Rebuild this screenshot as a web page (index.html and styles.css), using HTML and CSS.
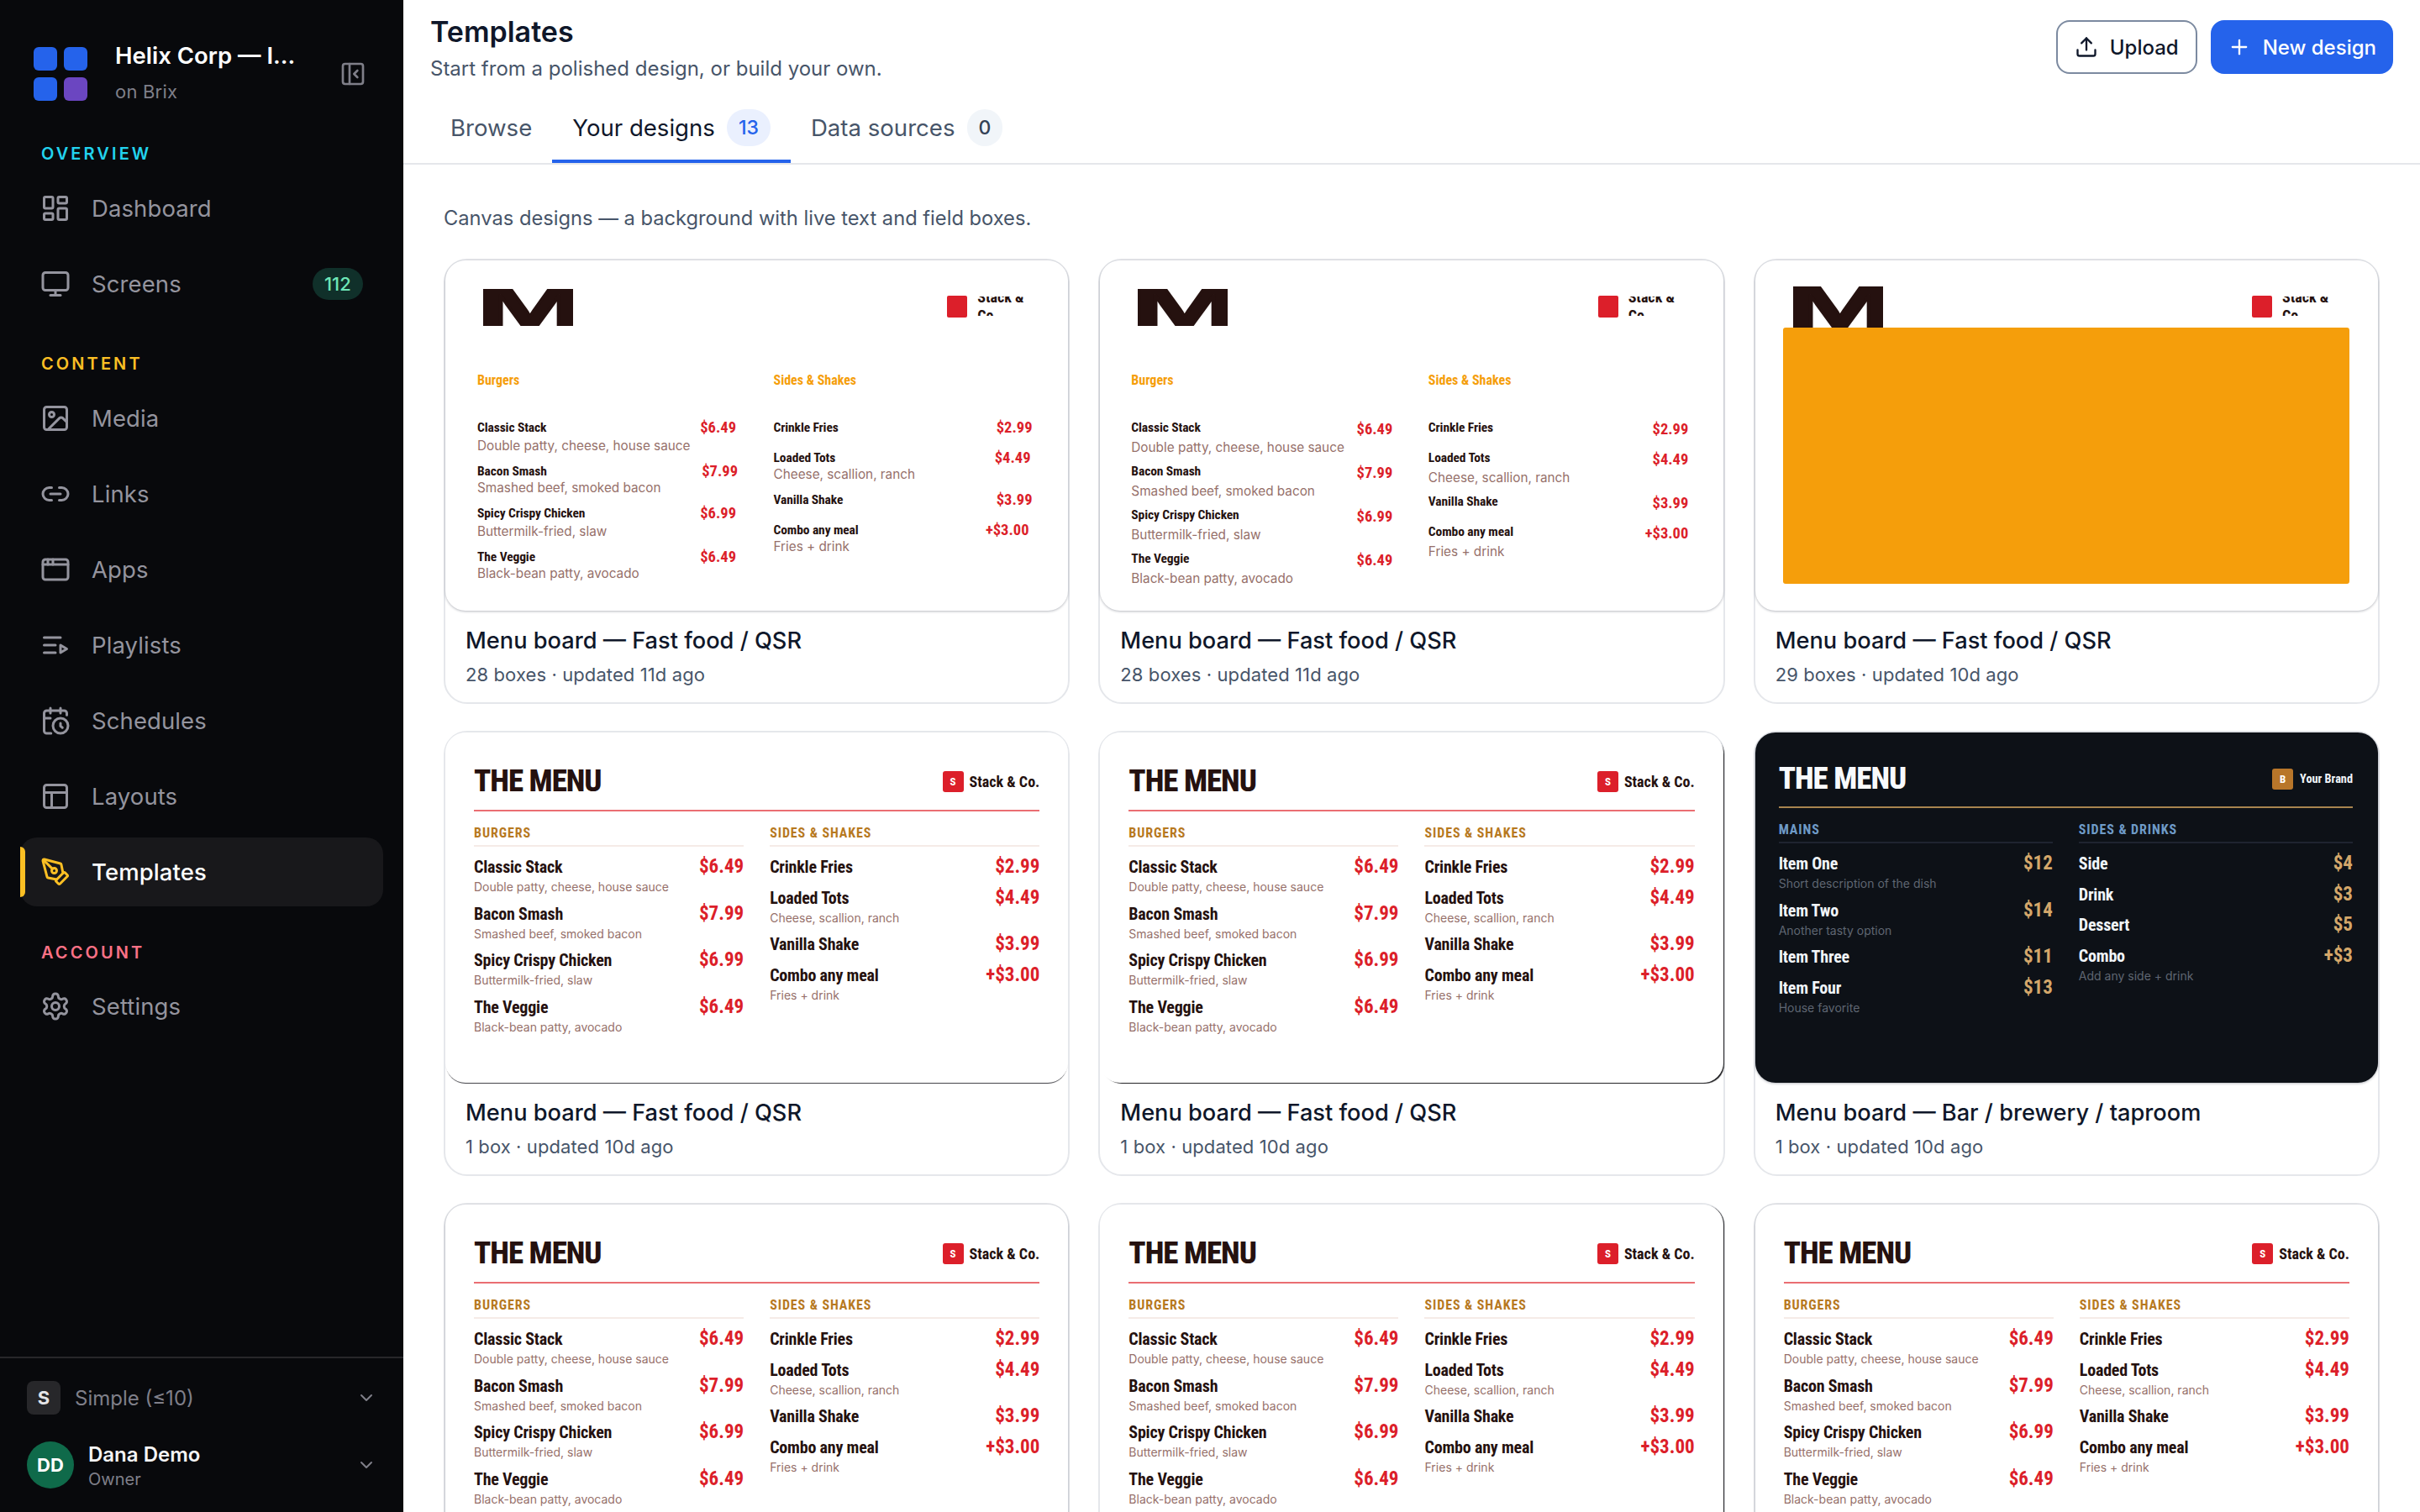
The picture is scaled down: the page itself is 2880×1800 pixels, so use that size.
FILE: index.html
```html
<!DOCTYPE html>
<html lang="en">

<head>
    <meta charset="UTF-8">
    <title>Templates</title>
    <link rel="stylesheet" href="styles.css">
</head>

<body>
    <div class="app">
        <aside class="sidebar">
            <div class="brand">
                <div class="brand-logo"><i></i><i></i><i></i><i class="purple"></i></div>
                <div class="brand-text">
                    <div class="brand-name">Helix Corp — I...</div>
                    <div class="brand-sub">on Brix</div>
                </div>
                <svg class="collapse" viewBox="0 0 24 24"><rect x="3" y="3" width="18" height="18" rx="2"/><path d="M9 3v18"/><path d="m16 15-3-3 3-3"/></svg>
            </div>

            <div class="nav-label cyan">OVERVIEW</div>
            <nav class="nav">
                <a class="nav-item"><svg viewBox="0 0 24 24"><rect x="3" y="3" width="7" height="9" rx="1"/><rect x="14" y="3" width="7" height="5" rx="1"/><rect x="14" y="12" width="7" height="9" rx="1"/><rect x="3" y="16" width="7" height="5" rx="1"/></svg>Dashboard</a>
                <a class="nav-item"><svg viewBox="0 0 24 24"><rect x="2" y="3" width="20" height="14" rx="2"/><path d="M8 21h8"/><path d="M12 17v4"/></svg>Screens<span class="nav-badge">112</span></a>
            </nav>

            <div class="nav-label amber">CONTENT</div>
            <nav class="nav">
                <a class="nav-item"><svg viewBox="0 0 24 24"><rect x="3" y="3" width="18" height="18" rx="2"/><circle cx="9" cy="9" r="2"/><path d="m21 15-3.086-3.086a2 2 0 0 0-2.828 0L6 21"/></svg>Media</a>
                <a class="nav-item"><svg viewBox="0 0 24 24"><path d="M9 17H7A5 5 0 0 1 7 7h2"/><path d="M15 7h2a5 5 0 1 1 0 10h-2"/><path d="M8 12h8"/></svg>Links</a>
                <a class="nav-item"><svg viewBox="0 0 24 24"><rect x="2" y="4" width="20" height="16" rx="2"/><path d="M10 4v4"/><path d="M2 8h20"/><path d="M6 4v4"/></svg>Apps</a>
                <a class="nav-item"><svg viewBox="0 0 24 24"><path d="M12 12H3"/><path d="M16 6H3"/><path d="M12 18H3"/><path d="m16 12 5 3-5 3v-6Z"/></svg>Playlists</a>
                <a class="nav-item"><svg viewBox="0 0 24 24"><path d="M21 7.5V6a2 2 0 0 0-2-2H5a2 2 0 0 0-2 2v14a2 2 0 0 0 2 2h3.5"/><path d="M16 2v4"/><path d="M8 2v4"/><path d="M3 10h5"/><path d="M17.5 17.5 16 16.3V14"/><circle cx="16" cy="16" r="6"/></svg>Schedules</a>
                <a class="nav-item"><svg viewBox="0 0 24 24"><rect x="3" y="3" width="18" height="18" rx="2"/><path d="M3 9h18"/><path d="M9 21V9"/></svg>Layouts</a>
                <a class="nav-item active"><svg viewBox="0 0 24 24"><path d="M15.707 21.293a1 1 0 0 1-1.414 0l-1.586-1.586a1 1 0 0 1 0-1.414l5.586-5.586a1 1 0 0 1 1.414 0l1.586 1.586a1 1 0 0 1 0 1.414z"/><path d="m18 13-1.375-6.874a1 1 0 0 0-.746-.776L3.235 2.028a1 1 0 0 0-1.207 1.207L5.35 15.879a1 1 0 0 0 .776.746L13 18"/><path d="m2.3 2.3 7.286 7.286"/><circle cx="11" cy="11" r="2"/></svg>Templates</a>
            </nav>

            <div class="nav-label rose">ACCOUNT</div>
            <nav class="nav">
                <a class="nav-item"><svg viewBox="0 0 24 24"><path d="M12.22 2h-.44a2 2 0 0 0-2 2v.18a2 2 0 0 1-1 1.73l-.43.25a2 2 0 0 1-2 0l-.15-.08a2 2 0 0 0-2.73.73l-.22.38a2 2 0 0 0 .73 2.73l.15.1a2 2 0 0 1 1 1.72v.51a2 2 0 0 1-1 1.74l-.15.09a2 2 0 0 0-.73 2.73l.22.38a2 2 0 0 0 2.73.73l.15-.08a2 2 0 0 1 2 0l.43.25a2 2 0 0 1 1 1.73V20a2 2 0 0 0 2 2h.44a2 2 0 0 0 2-2v-.18a2 2 0 0 1 1-1.73l.43-.25a2 2 0 0 1 2 0l.15.08a2 2 0 0 0 2.73-.73l.22-.39a2 2 0 0 0-.73-2.73l-.15-.08a2 2 0 0 1-1-1.74v-.5a2 2 0 0 1 1-1.74l.15-.09a2 2 0 0 0 .73-2.73l-.22-.38a2 2 0 0 0-2.73-.73l-.15.08a2 2 0 0 1-2 0l-.43-.25a2 2 0 0 1-1-1.73V4a2 2 0 0 0-2-2z"/><circle cx="12" cy="12" r="3"/></svg>Settings</a>
            </nav>

            <div class="side-foot">
                <div class="plan">
                    <span class="plan-icon">S</span>
                    <span class="plan-name">Simple (≤10)</span>
                    <svg class="chev" viewBox="0 0 24 24"><path d="m6 9 6 6 6-6"/></svg>
                </div>
                <div class="user">
                    <span class="avatar">DD</span>
                    <div class="user-text">
                        <div class="user-name">Dana Demo</div>
                        <div class="user-role">Owner</div>
                    </div>
                    <svg class="chev" viewBox="0 0 24 24"><path d="m6 9 6 6 6-6"/></svg>
                </div>
            </div>
        </aside>

        <main class="main">
            <header class="topbar">
                <div class="top-row">
                    <div>
                        <h1>Templates</h1>
                        <p class="subtitle">Start from a polished design, or build your own.</p>
                    </div>
                    <div class="actions">
                        <button class="btn"><svg viewBox="0 0 24 24"><path d="M21 15v4a2 2 0 0 1-2 2H5a2 2 0 0 1-2-2v-4"/><path d="M17 8l-5-5-5 5"/><path d="M12 3v12"/></svg>Upload</button>
                        <button class="btn primary"><svg viewBox="0 0 24 24"><path d="M5 12h14"/><path d="M12 5v14"/></svg>New design</button>
                    </div>
                </div>
                <div class="tabs">
                    <a class="tab">Browse</a>
                    <a class="tab active">Your designs<span class="count blue">13</span></a>
                    <a class="tab">Data sources<span class="count">0</span></a>
                </div>
            </header>

            <section class="content">
                <p class="intro">Canvas designs — a background with live text and field boxes.</p>
                <div class="grid">

                    <article class="card">
                        <div class="preview canvas">
                            <div class="canvas-head">
                                <div class="clip-title"><span>M</span></div>
                                <div class="clip-logo"><span class="clip-mark"></span><span class="clip-name"><span>Stack &amp;<br>Co.</span></span></div>
                            </div>
                            <div class="canvas-cols">
                                <div>
                                    <div class="canvas-sec">Burgers</div>
                                    <div class="item"><span class="name">Classic Stack</span><span class="price">$6.49</span><span class="desc">Double patty, cheese, house sauce</span></div>
                                    <div class="item tight"><span class="name">Bacon Smash</span><span class="price push-r">$7.99</span><span class="desc">Smashed beef, smoked bacon</span></div>
                                    <div class="item"><span class="name">Spicy Crispy Chicken</span><span class="price">$6.99</span><span class="desc">Buttermilk-fried, slaw</span></div>
                                    <div class="item tight"><span class="name">The Veggie</span><span class="price">$6.49</span><span class="desc">Black-bean patty, avocado</span></div>
                                </div>
                                <div>
                                    <div class="canvas-sec">Sides &amp; Shakes</div>
                                    <div class="item short"><span class="name">Crinkle Fries</span><span class="price">$2.99</span></div>
                                    <div class="item tight"><span class="name">Loaded Tots</span><span class="price push-l">$4.49</span><span class="desc">Cheese, scallion, ranch</span></div>
                                    <div class="item short"><span class="name">Vanilla Shake</span><span class="price">$3.99</span></div>
                                    <div class="item tight"><span class="name">Combo any meal</span><span class="price push-l2">+$3.00</span><span class="desc">Fries + drink</span></div>
                                </div>
                            </div>
                        </div>
                        <div class="caption"><div class="card-title">Menu board — Fast food / QSR</div><div class="card-meta">28 boxes · updated 11d ago</div></div>
                    </article>

                    <article class="card">
                        <div class="preview canvas second">
                            <div class="canvas-head">
                                <div class="clip-title"><span>M</span></div>
                                <div class="clip-logo"><span class="clip-mark"></span><span class="clip-name"><span>Stack &amp;<br>Co.</span></span></div>
                            </div>
                            <div class="canvas-cols">
                                <div>
                                    <div class="canvas-sec">Burgers</div>
                                    <div class="item"><span class="name">Classic Stack</span><span class="price">$6.49</span><span class="desc">Double patty, cheese, house sauce</span></div>
                                    <div class="item"><span class="name">Bacon Smash</span><span class="price">$7.99</span><span class="desc">Smashed beef, smoked bacon</span></div>
                                    <div class="item"><span class="name">Spicy Crispy Chicken</span><span class="price">$6.99</span><span class="desc">Buttermilk-fried, slaw</span></div>
                                    <div class="item"><span class="name">The Veggie</span><span class="price">$6.49</span><span class="desc">Black-bean patty, avocado</span></div>
                                </div>
                                <div>
                                    <div class="canvas-sec">Sides &amp; Shakes</div>
                                    <div class="item short"><span class="name">Crinkle Fries</span><span class="price">$2.99</span></div>
                                    <div class="item"><span class="name">Loaded Tots</span><span class="price">$4.49</span><span class="desc">Cheese, scallion, ranch</span></div>
                                    <div class="item short"><span class="name">Vanilla Shake</span><span class="price">$3.99</span></div>
                                    <div class="item"><span class="name">Combo any meal</span><span class="price">+$3.00</span><span class="desc">Fries + drink</span></div>
                                </div>
                            </div>
                        </div>
                        <div class="caption"><div class="card-title">Menu board — Fast food / QSR</div><div class="card-meta">28 boxes · updated 11d ago</div></div>
                    </article>

                    <article class="card">
                        <div class="preview canvas third">
                            <div class="canvas-head">
                                <div class="clip-title"><span>M</span></div>
                                <div class="clip-logo"><span class="clip-mark"></span><span class="clip-name"><span>Stack &amp;<br>Co.</span></span></div>
                            </div>
                            <div class="orange-box"></div>
                        </div>
                        <div class="caption"><div class="card-title">Menu board — Fast food / QSR</div><div class="card-meta">29 boxes · updated 10d ago</div></div>
                    </article>

                    <article class="card">
                        <div class="preview board edge-b">
                            <div class="board-head"><div class="board-title">THE MENU</div><div class="board-logo"><span class="mark">S</span>Stack &amp; Co.</div></div>
                            <div class="board-cols">
                                <div>
                                    <div class="board-sec">BURGERS</div>
                                    <div class="row"><span class="name">Classic Stack</span><span class="price">$6.49</span><span class="desc">Double patty, cheese, house sauce</span></div>
                                    <div class="row"><span class="name">Bacon Smash</span><span class="price">$7.99</span><span class="desc">Smashed beef, smoked bacon</span></div>
                                    <div class="row"><span class="name">Spicy Crispy Chicken</span><span class="price">$6.99</span><span class="desc">Buttermilk-fried, slaw</span></div>
                                    <div class="row"><span class="name">The Veggie</span><span class="price">$6.49</span><span class="desc">Black-bean patty, avocado</span></div>
                                </div>
                                <div>
                                    <div class="board-sec">SIDES &amp; SHAKES</div>
                                    <div class="row"><span class="name">Crinkle Fries</span><span class="price">$2.99</span></div>
                                    <div class="row"><span class="name">Loaded Tots</span><span class="price">$4.49</span><span class="desc">Cheese, scallion, ranch</span></div>
                                    <div class="row"><span class="name">Vanilla Shake</span><span class="price">$3.99</span></div>
                                    <div class="row"><span class="name">Combo any meal</span><span class="price">+$3.00</span><span class="desc">Fries + drink</span></div>
                                </div>
                            </div>
                        </div>
                        <div class="caption"><div class="card-title">Menu board — Fast food / QSR</div><div class="card-meta">1 box · updated 10d ago</div></div>
                    </article>

                    <article class="card">
                        <div class="preview board edge-br">
                            <div class="board-head"><div class="board-title">THE MENU</div><div class="board-logo"><span class="mark">S</span>Stack &amp; Co.</div></div>
                            <div class="board-cols">
                                <div>
                                    <div class="board-sec">BURGERS</div>
                                    <div class="row"><span class="name">Classic Stack</span><span class="price">$6.49</span><span class="desc">Double patty, cheese, house sauce</span></div>
                                    <div class="row"><span class="name">Bacon Smash</span><span class="price">$7.99</span><span class="desc">Smashed beef, smoked bacon</span></div>
                                    <div class="row"><span class="name">Spicy Crispy Chicken</span><span class="price">$6.99</span><span class="desc">Buttermilk-fried, slaw</span></div>
                                    <div class="row"><span class="name">The Veggie</span><span class="price">$6.49</span><span class="desc">Black-bean patty, avocado</span></div>
                                </div>
                                <div>
                                    <div class="board-sec">SIDES &amp; SHAKES</div>
                                    <div class="row"><span class="name">Crinkle Fries</span><span class="price">$2.99</span></div>
                                    <div class="row"><span class="name">Loaded Tots</span><span class="price">$4.49</span><span class="desc">Cheese, scallion, ranch</span></div>
                                    <div class="row"><span class="name">Vanilla Shake</span><span class="price">$3.99</span></div>
                                    <div class="row"><span class="name">Combo any meal</span><span class="price">+$3.00</span><span class="desc">Fries + drink</span></div>
                                </div>
                            </div>
                        </div>
                        <div class="caption"><div class="card-title">Menu board — Fast food / QSR</div><div class="card-meta">1 box · updated 10d ago</div></div>
                    </article>

                    <article class="card">
                        <div class="preview board dark">
                            <div class="board-head"><div class="board-title">THE MENU</div><div class="board-logo"><span class="mark">B</span>Your Brand</div></div>
                            <div class="board-cols">
                                <div>
                                    <div class="board-sec">MAINS</div>
                                    <div class="row"><span class="name">Item One</span><span class="price">$12</span><span class="desc">Short description of the dish</span></div>
                                    <div class="row"><span class="name">Item Two</span><span class="price">$14</span><span class="desc">Another tasty option</span></div>
                                    <div class="row"><span class="name">Item Three</span><span class="price">$11</span></div>
                                    <div class="row"><span class="name">Item Four</span><span class="price">$13</span><span class="desc">House favorite</span></div>
                                </div>
                                <div>
                                    <div class="board-sec">SIDES &amp; DRINKS</div>
                                    <div class="row"><span class="name">Side</span><span class="price">$4</span></div>
                                    <div class="row"><span class="name">Drink</span><span class="price">$3</span></div>
                                    <div class="row"><span class="name">Dessert</span><span class="price">$5</span></div>
                                    <div class="row"><span class="name">Combo</span><span class="price">+$3</span><span class="desc">Add any side + drink</span></div>
                                </div>
                            </div>
                        </div>
                        <div class="caption"><div class="card-title">Menu board — Bar / brewery / taproom</div><div class="card-meta">1 box · updated 10d ago</div></div>
                    </article>

                    <article class="card">
                        <div class="preview board">
                            <div class="board-head"><div class="board-title">THE MENU</div><div class="board-logo"><span class="mark">S</span>Stack &amp; Co.</div></div>
                            <div class="board-cols">
                                <div>
                                    <div class="board-sec">BURGERS</div>
                                    <div class="row"><span class="name">Classic Stack</span><span class="price">$6.49</span><span class="desc">Double patty, cheese, house sauce</span></div>
                                    <div class="row"><span class="name">Bacon Smash</span><span class="price">$7.99</span><span class="desc">Smashed beef, smoked bacon</span></div>
                                    <div class="row"><span class="name">Spicy Crispy Chicken</span><span class="price">$6.99</span><span class="desc">Buttermilk-fried, slaw</span></div>
                                    <div class="row"><span class="name">The Veggie</span><span class="price">$6.49</span><span class="desc">Black-bean patty, avocado</span></div>
                                </div>
                                <div>
                                    <div class="board-sec">SIDES &amp; SHAKES</div>
                                    <div class="row"><span class="name">Crinkle Fries</span><span class="price">$2.99</span></div>
                                    <div class="row"><span class="name">Loaded Tots</span><span class="price">$4.49</span><span class="desc">Cheese, scallion, ranch</span></div>
                                    <div class="row"><span class="name">Vanilla Shake</span><span class="price">$3.99</span></div>
                                    <div class="row"><span class="name">Combo any meal</span><span class="price">+$3.00</span><span class="desc">Fries + drink</span></div>
                                </div>
                            </div>
                        </div>
                    </article>

                    <article class="card">
                        <div class="preview board edge-r">
                            <div class="board-head"><div class="board-title">THE MENU</div><div class="board-logo"><span class="mark">S</span>Stack &amp; Co.</div></div>
                            <div class="board-cols">
                                <div>
                                    <div class="board-sec">BURGERS</div>
                                    <div class="row"><span class="name">Classic Stack</span><span class="price">$6.49</span><span class="desc">Double patty, cheese, house sauce</span></div>
                                    <div class="row"><span class="name">Bacon Smash</span><span class="price">$7.99</span><span class="desc">Smashed beef, smoked bacon</span></div>
                                    <div class="row"><span class="name">Spicy Crispy Chicken</span><span class="price">$6.99</span><span class="desc">Buttermilk-fried, slaw</span></div>
                                    <div class="row"><span class="name">The Veggie</span><span class="price">$6.49</span><span class="desc">Black-bean patty, avocado</span></div>
                                </div>
                                <div>
                                    <div class="board-sec">SIDES &amp; SHAKES</div>
                                    <div class="row"><span class="name">Crinkle Fries</span><span class="price">$2.99</span></div>
                                    <div class="row"><span class="name">Loaded Tots</span><span class="price">$4.49</span><span class="desc">Cheese, scallion, ranch</span></div>
                                    <div class="row"><span class="name">Vanilla Shake</span><span class="price">$3.99</span></div>
                                    <div class="row"><span class="name">Combo any meal</span><span class="price">+$3.00</span><span class="desc">Fries + drink</span></div>
                                </div>
                            </div>
                        </div>
                    </article>

                    <article class="card">
                        <div class="preview board">
                            <div class="board-head"><div class="board-title">THE MENU</div><div class="board-logo"><span class="mark">S</span>Stack &amp; Co.</div></div>
                            <div class="board-cols">
                                <div>
                                    <div class="board-sec">BURGERS</div>
                                    <div class="row"><span class="name">Classic Stack</span><span class="price">$6.49</span><span class="desc">Double patty, cheese, house sauce</span></div>
                                    <div class="row"><span class="name">Bacon Smash</span><span class="price">$7.99</span><span class="desc">Smashed beef, smoked bacon</span></div>
                                    <div class="row"><span class="name">Spicy Crispy Chicken</span><span class="price">$6.99</span><span class="desc">Buttermilk-fried, slaw</span></div>
                                    <div class="row"><span class="name">The Veggie</span><span class="price">$6.49</span><span class="desc">Black-bean patty, avocado</span></div>
                                </div>
                                <div>
                                    <div class="board-sec">SIDES &amp; SHAKES</div>
                                    <div class="row"><span class="name">Crinkle Fries</span><span class="price">$2.99</span></div>
                                    <div class="row"><span class="name">Loaded Tots</span><span class="price">$4.49</span><span class="desc">Cheese, scallion, ranch</span></div>
                                    <div class="row"><span class="name">Vanilla Shake</span><span class="price">$3.99</span></div>
                                    <div class="row"><span class="name">Combo any meal</span><span class="price">+$3.00</span><span class="desc">Fries + drink</span></div>
                                </div>
                            </div>
                        </div>
                    </article>

                </div>
            </section>
        </main>
    </div>
</body>

</html>
```

FILE: styles.css
```css
* {
    margin: 0;
    padding: 0;
    box-sizing: border-box;
}

html,
body {
    height: 100%;
    overflow: hidden;
}

body {
    font-family: 'Inter', 'Liberation Sans', sans-serif;
    background-color: #fff;
    color: #0f172a;
}

.app {
    display: flex;
    height: 1800px;
}

svg {
    fill: none;
    stroke: currentColor;
    stroke-width: 2;
    stroke-linecap: round;
    stroke-linejoin: round;
    flex-shrink: 0;
}

/* sidebar */
.sidebar {
    width: 480px;
    flex-shrink: 0;
    background-color: #08090c;
    color: #94949e;
    display: flex;
    flex-direction: column;
}

.brand {
    display: flex;
    align-items: center;
    height: 176px;
    margin-bottom: -7px;
    padding: 0 44px 0 40px;
}

.brand-logo {
    display: grid;
    grid-template-columns: 28px 28px;
    grid-template-rows: 28px 28px;
    gap: 8px;
    width: 64px;
}

.brand-logo i {
    display: block;
    border-radius: 6px;
    background-color: #2563eb;
}

.brand-logo .purple {
    background-color: #6b46c1;
}

.brand-text {
    margin-left: 33px;
    flex: 1;
    margin-top: -4px;
}

.brand-name {
    font-size: 27.5px;
    font-weight: 600;
    line-height: 40px;
    color: #fff;
}

.brand-sub {
    font-size: 22px;
    line-height: 36px;
    margin-top: 5px;
    letter-spacing: 0.2px;
    color: #7f7f89;
}

.collapse {
    width: 32px;
    height: 32px;
    color: #7f7f89;
}

.nav-label {
    font-size: 20px;
    font-weight: 600;
    letter-spacing: 3.1px;
    line-height: 28px;
    padding-left: 49px;
    margin-bottom: 10px;
}

.cyan {
    color: #22d3ee;
}

.amber {
    color: #fbbf24;
}

.rose {
    color: #fb7185;
    margin-top: 1px;
    margin-bottom: 9px;
}

.nav {
    display: flex;
    flex-direction: column;
    gap: 8px;
    padding: 0 24px;
    margin-bottom: 40px;
}

.nav-item {
    position: relative;
    display: flex;
    align-items: center;
    gap: 25px;
    height: 82px;
    padding: 0 24px;
    border-radius: 20px;
    font-size: 27.5px;
    letter-spacing: 0.1px;
}

.nav-item svg {
    width: 36px;
    height: 36px;
}

.nav-item.active {
    background-color: #18181b;
    color: #fff;
    font-weight: 500;
}

.nav-item.active svg {
    color: #fbbf24;
}

.nav-item.active::before {
    content: "";
    position: absolute;
    left: 0;
    top: 11px;
    bottom: 11px;
    width: 6px;
    border-radius: 0 6px 6px 0;
    background-color: #fbbf24;
}

.nav-badge {
    margin-left: auto;
    padding: 0 14px;
    height: 38px;
    line-height: 38px;
    border-radius: 19px;
    background-color: #10302a;
    color: #6ee7b7;
    font-size: 22px;
    font-weight: 500;
}

.side-foot {
    margin-top: auto;
    border-top: 2px solid #27272a;
    padding: 27px 32px 27px;
}

.plan {
    display: flex;
    align-items: center;
    height: 40px;
    font-size: 24px;
    color: #7f7f89;
}

.plan-icon {
    width: 40px;
    height: 40px;
    border-radius: 8px;
    background-color: #27272a;
    color: #e4e4e7;
    font-size: 22px;
    font-weight: 700;
    display: flex;
    align-items: center;
    justify-content: center;
    margin-right: 17px;
}

.plan-name {
    flex: 1;
}

.chev {
    width: 24px;
    height: 24px;
    color: #7f7f89;
}

.user {
    display: flex;
    align-items: center;
    height: 58px;
    margin-top: 31px;
}

.avatar {
    width: 56px;
    height: 56px;
    border-radius: 50%;
    background-color: #0f6a4a;
    color: #fff;
    font-size: 22px;
    font-weight: 700;
    display: flex;
    align-items: center;
    justify-content: center;
    margin-right: 17px;
}

.user-text {
    flex: 1;
    margin-top: 3px;
}

.user-name {
    font-size: 24px;
    font-weight: 600;
    line-height: 30px;
    color: #f4f4f5;
}

.user-role {
    font-size: 20px;
    line-height: 28px;
    color: #7f7f89;
}

/* top */
.main {
    flex: 1;
    min-width: 0;
    display: flex;
    flex-direction: column;
    overflow: hidden;
}

.topbar {
    height: 196px;
    border-bottom: 2px solid #e5e7eb;
    padding: 0 32px;
}

.top-row {
    display: flex;
    justify-content: space-between;
    height: 112px;
    padding-top: 16px;
}

h1 {
    font-size: 34px;
    font-weight: 600;
    line-height: 44px;
}

.subtitle {
    font-size: 24px;
    line-height: 36px;
    margin-top: 4px;
    color: #475569;
}

.actions {
    display: flex;
    gap: 16px;
    margin-top: 8px;
}

.btn {
    display: flex;
    align-items: center;
    gap: 14px;
    height: 64px;
    padding: 0 20px;
    border: 2px solid #7c8aa0;
    border-radius: 16px;
    background-color: #fff;
    color: #0f172a;
    font-family: inherit;
    font-size: 24px;
    font-weight: 500;
}

.btn svg {
    width: 28px;
    height: 28px;
}

.btn.primary {
    padding: 0 18px;
    background-color: #2563eb;
    border-color: #2563eb;
    color: #fff;
}

.tabs {
    display: flex;
    height: 82px;
}

.tab {
    display: flex;
    align-items: center;
    padding: 2px 24px 0;
    border-bottom: 4px solid transparent;
    font-size: 27.6px;
    color: #475569;
    height: 82px;
}

.tab.active {
    color: #0f172a;
    border-bottom-color: #2563eb;
}

.count {
    display: flex;
    align-items: center;
    justify-content: center;
    height: 44px;
    min-width: 40px;
    padding: 0 14px;
    margin-left: 14px;
    border-radius: 22px;
    background-color: #f1f5f9;
    color: #334155;
    font-size: 23px;
    font-weight: 500;
}

.count.blue {
    background-color: #eaf0fe;
    color: #2563eb;
}

/* content */
.content {
    padding: 46px 48px 0;
}

.intro {
    font-size: 23.7px;
    line-height: 36px;
    color: #475569;
    margin-bottom: 30px;
}

.grid {
    display: grid;
    grid-template-columns: repeat(3, 1fr);
    gap: 32px 34px;
}

.card {
    border: 2px solid #e5e7eb;
    border-radius: 28px;
    background-color: #fff;
    height: 530px;
}

.preview {
    position: relative;
    height: 417px;
    border-radius: 24px;
    overflow: hidden;
    background-color: #fff;
    box-shadow: 0 1px 3px rgba(15, 23, 42, 0.3);
}

.caption {
    padding: 16px 24px 0;
}

.card-title {
    font-size: 27.2px;
    font-weight: 500;
    line-height: 40px;
    color: #0f172a;
}

.card-meta {
    font-size: 22px;
    line-height: 36px;
    margin-top: 2px;
    letter-spacing: 0.1px;
    color: #475569;
}

/* shared menu text */
.name {
    font-family: 'Roboto', sans-serif;
    font-stretch: 75%;
    font-weight: 700;
    letter-spacing: -0.2px;
    color: #25110f;
}

.price {
    font-family: 'Roboto', sans-serif;
    font-stretch: 87%;
    font-weight: 700;
    color: #dc1f2a;
    text-align: right;
}

.desc {
    font-family: 'Inter', sans-serif;
    color: #96706a;
    grid-column: 1 / 3;
}

/* canvas design, free boxes */
.canvas-head {
    display: flex;
    justify-content: space-between;
    height: 133px;
    padding: 34px 46px 0 45px;
}

.second .canvas-head {
    padding-right: 51px;
}

.third .canvas-head {
    padding: 30px 52px 0 45px;
}

.clip-title {
    width: 107px;
    height: 44px;
    overflow: hidden;
}

.clip-title span {
    display: block;
    margin: -4px 0 0 -9px;
    font-family: 'Liberation Sans', sans-serif;
    font-weight: 700;
    font-size: 68px;
    line-height: 50px;
    color: #25110f;
    -webkit-text-stroke: 2px #25110f;
    transform: scaleX(2.28);
    transform-origin: left top;
}

.third .clip-title {
    height: 50px;
}

.third .clip-title span {
    margin-top: 0;
}

.clip-logo {
    display: flex;
    gap: 12px;
    width: 98px;
    height: 26px;
    margin-top: 8px;
}

.third .clip-logo {
    margin-top: 12px;
}

.clip-mark {
    width: 24px;
    height: 26px;
    flex-shrink: 0;
    border-radius: 2px;
    background-color: #dc1f2a;
}

.clip-name {
    display: flex;
    align-items: center;
    height: 23px;
    width: 62px;
    margin-top: 1px;
    overflow: hidden;
    white-space: nowrap;
    font-family: 'Roboto', sans-serif;
    font-stretch: 85%;
    font-weight: 700;
    font-size: 18px;
    line-height: 22px;
    color: #25110f;
}

.canvas-cols {
    display: grid;
    grid-template-columns: 308px 308px;
    gap: 44.5px;
    padding-left: 38px;
}

.second .canvas-cols {
    grid-template-columns: 311px 309.5px;
    gap: 42.5px;
    padding-left: 37px;
}

.canvas-sec {
    font-family: 'Roboto', sans-serif;
    font-stretch: 80%;
    font-size: 16px;
    font-weight: 700;
    line-height: 20px;
    color: #f59e0b;
    margin-bottom: 34px;
}

.item {
    display: grid;
    grid-template-columns: 1fr auto;
    align-content: start;
    height: 52px;
}

.item.short {
    height: 36px;
}

.item.tight {
    height: 50px;
}

.item .name {
    font-size: 15.5px;
    letter-spacing: -0.1px;
    line-height: 24px;
}

.item .price {
    font-size: 18.5px;
    line-height: 24px;
}

.second .item .price {
    padding-top: 2px;
}

.push-r {
    margin-right: -2px;
}

.push-l {
    margin-right: 2px;
}

.push-l2 {
    margin-right: 4px;
}

.item .desc {
    font-size: 15.3px;
    line-height: 20px;
}

.item.tight .desc {
    line-height: 16px;
}

.orange-box {
    position: absolute;
    left: 33px;
    top: 80px;
    width: 674px;
    height: 305px;
    border-radius: 3px;
    background-color: #f59e0b;
}

/* board design */
.board {
    padding: 0 34px;
}

.board-head {
    display: flex;
    justify-content: space-between;
    align-items: center;
    height: 94px;
    padding-top: 24px;
    border-bottom: 2px solid #ea6e72;
}

.board-title {
    font-family: 'Roboto', sans-serif;
    font-stretch: 75%;
    font-weight: 800;
    font-size: 37px;
    letter-spacing: -1px;
    line-height: 44px;
    color: #25110f;
}

.board-logo {
    display: flex;
    align-items: center;
    gap: 7px;
    font-family: 'Roboto', sans-serif;
    font-stretch: 85%;
    font-weight: 700;
    font-size: 18px;
    color: #25110f;
}

.mark {
    width: 25px;
    height: 25px;
    border-radius: 3px;
    background-color: #dc1f2a;
    color: #fff;
    font-size: 13px;
    display: flex;
    align-items: center;
    justify-content: center;
}

.board-cols {
    display: grid;
    grid-template-columns: 1fr 1fr;
    gap: 31px;
    padding-top: 16px;
}

.board-sec {
    font-family: 'Roboto', sans-serif;
    font-stretch: 80%;
    font-size: 16px;
    font-weight: 700;
    line-height: 20px;
    letter-spacing: 0.9px;
    color: #b7791f;
    padding-bottom: 4px;
    border-bottom: 2px solid #f5ebe7;
    margin-bottom: 9px;
}

.row {
    display: grid;
    grid-template-columns: 1fr auto;
    margin-bottom: 6.5px;
}

.row .name {
    font-size: 20px;
    line-height: 30px;
}

.row .price {
    font-size: 23px;
    line-height: 30px;
}

.row .desc {
    font-size: 14px;
    line-height: 20px;
    margin-top: -1px;
}

.edge-b {
    box-shadow: 0 2px 1px -1px #3a3a40;
}

.edge-br {
    box-shadow: 2px 2px 1px -1px #18181b;
}

.edge-r {
    box-shadow: 2px 0 1px -1px #18181b;
}

.dark {
    background-color: #0d1117;
    padding: 0 30px 0 28px;
}

.dark .board-head {
    height: 90px;
    padding-top: 22px;
    border-bottom-color: #a8844f;
}

.dark .board-title {
    color: #f8fafc;
}

.dark .board-logo {
    gap: 8px;
    font-stretch: 75%;
    color: #f1f5f9;
    font-size: 14.3px;
}

.dark .mark {
    background-color: #b8762a;
}

.dark .board-sec {
    color: #6f9bc8;
    border-bottom-color: #1f2430;
}

.dark .name {
    color: #f1f5f9;
}

.dark .price {
    color: #d4a76a;
}

.dark .desc {
    color: #5f6672;
}
```
